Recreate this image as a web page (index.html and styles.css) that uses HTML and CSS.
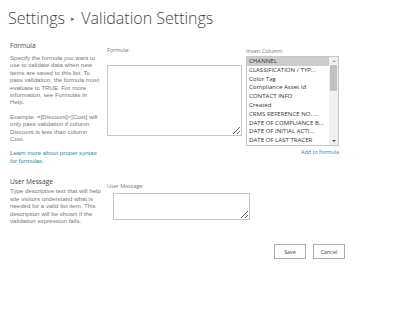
FILE: index.html
```html
<!DOCTYPE html>
<html lang="en">
<head>
    <meta charset="UTF-8">
    <meta name="viewport" content="width=device-width, initial-scale=1.0">
    <link rel="stylesheet" href="styles.css">
    <title>Validation Settings</title>
</head>
<body>
    <div class="page">
        <!-- หัวเรื่อง -->
        <h1 class="title">Settings <span class="crumb">&#9656;</span> Validation Settings</h1>

        <!-- ส่วน Formula -->
        <div class="section section-formula">
            <div class="section-desc">
                <h3>Formula</h3>
                <p>Specify the formula you want to use to validate data when new items are saved to this list. To pass validation, the formula must evaluate to TRUE. For more information, see Formulas in Help.</p>
                <p>Example: =[Discount]&lt;[Cost] will only pass validation if column Discount is less than column Cost.</p>
                <p><a href="#">Learn more about proper syntax for formulas.</a></p>
            </div>
            <div class="section-fields">
                <div class="formula-col">
                    <label class="field-label">Formula:</label>
                    <textarea class="formula-box"></textarea>
                </div>
                <div class="insert-col">
                    <label class="field-label">Insert Column:</label>
                    <div class="listbox">
                        <ul class="list-items">
                            <li class="selected">CHANNEL</li>
                            <li>CLASSIFICATION / TYP...</li>
                            <li>Color Tag</li>
                            <li>Compliance Asset Id</li>
                            <li>CONTACT INFO</li>
                            <li>Created</li>
                            <li>CRMS REFERENCE NO. ...</li>
                            <li>DATE OF COMPLIANCE B...</li>
                            <li>DATE OF INITIAL ACTI...</li>
                            <li>DATE OF LAST TRACER</li>
                        </ul>
                        <div class="scrollbar">
                            <span class="arrow up"></span>
                            <span class="thumb"></span>
                            <span class="arrow down"></span>
                        </div>
                    </div>
                    <a href="#" class="add-link">Add to formula</a>
                </div>
            </div>
        </div>

        <!-- ส่วน User Message -->
        <div class="section section-message">
            <div class="section-desc">
                <h3>User Message</h3>
                <p>Type descriptive text that will help site visitors understand what is needed for a valid list item. This description will be shown if the validation expression fails.</p>
            </div>
            <div class="section-fields message-fields">
                <label class="field-label">User Message:</label>
                <textarea class="message-box"></textarea>
            </div>
        </div>

        <!-- ปุ่ม -->
        <div class="buttons">
            <button class="btn">Save</button>
            <button class="btn">Cancel</button>
        </div>
    </div>
</body>
</html>
```

FILE: styles.css
```css
/* หน้าหลัก */
body {
    font-family: "Open Sans", "Liberation Sans", sans-serif;
    margin: 0;
    padding: 0;
    background-color: #ffffff;
    color: #444444;
}

.page {
    width: 399px;
    padding: 6px 0 0 8px;
    box-sizing: border-box;
}

/* หัวเรื่อง */
.title {
    margin: 0;
    font-size: 16px;
    font-weight: 300;
    line-height: 24px;
    color: #444444;
    white-space: nowrap;
}

.title .crumb {
    font-size: 7px;
    vertical-align: 3px;
    color: #666666;
    margin: 0 2px;
}

/* ส่วนต่างๆ */
.section {
    display: flex;
}

.section-formula {
    margin-top: 10px;
}

.section-desc {
    width: 92px;
    padding-left: 2px;
    color: #777777;
    font-family: "Liberation Sans", Arial, sans-serif;
    font-size: 6.1px;
    line-height: 7.4px;
}

.section-desc h3 {
    margin: 0 0 3px 0;
    font-family: "Open Sans", "Liberation Sans", sans-serif;
    font-size: 6.6px;
    font-weight: 400;
    line-height: 10px;
    color: #444444;
}

.section-desc p {
    margin: 0 0 7px 0;
}

.section-desc a {
    color: #1e8c9c;
    text-decoration: none;
}

.section-fields {
    margin-left: 5px;
    display: flex;
    gap: 4px;
}

.field-label {
    display: block;
    font-size: 5.4px;
    line-height: 8px;
    color: #777777;
}

/* Formula */
.formula-col {
    padding-top: 5px;
}

.formula-col .field-label {
    margin-bottom: 11px;
}

.formula-box {
    display: block;
    width: 135px;
    height: 71px;
    margin: 0;
    border: 1px solid #c6c6c6;
    box-sizing: border-box;
    resize: both;
}

/* Insert Column */
.insert-col {
    padding-top: 6px;
    display: flex;
    flex-direction: column;
}

.insert-col .field-label {
    margin-bottom: 1px;
}

.listbox {
    display: flex;
    width: 93px;
    height: 90px;
    border: 1px solid #c6c6c6;
    box-sizing: border-box;
}

.list-items {
    list-style-type: none;
    margin: 0;
    padding: 0;
    flex: 1;
    font-size: 6.1px;
    color: #333333;
}

.list-items li {
    height: 8.8px;
    line-height: 8.8px;
    padding-left: 2px;
    white-space: nowrap;
    overflow: hidden;
}

.list-items li.selected {
    background-color: #cccccc;
}

.scrollbar {
    width: 9px;
    background-color: #f0f0f0;
    display: flex;
    flex-direction: column;
    align-items: center;
}

.scrollbar .arrow {
    width: 0;
    height: 0;
    border-left: 2px solid transparent;
    border-right: 2px solid transparent;
}

.scrollbar .arrow.up {
    margin: 3px 0 3px 0;
    border-bottom: 2px solid #a3a3a3;
}

.scrollbar .arrow.down {
    margin: auto 0 3px 0;
    border-top: 2px solid #505050;
}

.scrollbar .thumb {
    width: 7px;
    height: 26px;
    background-color: #c1c1c1;
}

.add-link {
    align-self: flex-end;
    margin-top: 2px;
    font-size: 5.4px;
    line-height: 8px;
    color: #1e8c9c;
    text-decoration: none;
}

/* User Message */
.section-message {
    margin-top: 7px;
}

.section-message .section-desc h3 {
    margin-bottom: 1px;
    line-height: 8px;
}

.message-fields {
    display: block;
    padding-top: 4px;
}

.message-box {
    display: block;
    width: 137px;
    height: 27px;
    margin: 3px 0 0 6px;
    border: 1px solid #c6c6c6;
    box-sizing: border-box;
    resize: both;
}

/* ปุ่ม */
.buttons {
    display: flex;
    gap: 7px;
    padding-left: 266px;
    margin-top: 13px;
}

.btn {
    width: 32px;
    height: 15px;
    padding: 0;
    font-family: "Open Sans", "Liberation Sans", sans-serif;
    font-size: 5.4px;
    color: #444444;
    background-color: #fdfdfd;
    border: 1px solid #ababab;
}
```
